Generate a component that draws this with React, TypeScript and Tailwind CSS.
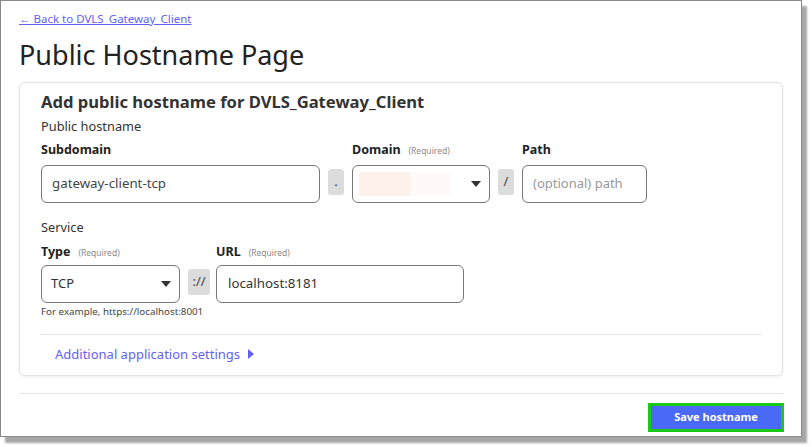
const font = { fontFamily: '"Noto Sans", "Open Sans", sans-serif' };

const Req = () => <span className="ml-2 text-[8.5px] font-normal text-[#8a8a8a]">(Required)</span>;

const Caret = () => (
  <svg width="10" height="6" viewBox="0 0 10 6" className="absolute right-[8px] top-1/2 -translate-y-1/2">
    <path d="M0 0h10L5 6z" fill="#333" />
  </svg>
);

const Sep = ({ children, w }: { children: string; w: string }) => (
  <div className={`mt-[4px] flex h-[26px] ${w} items-center justify-center rounded-[3px] bg-[#dcdcdc] text-[13px] text-[#444]`}>
    {children}
  </div>
);

export default function App() {
  return (
    <div className="h-[447px] w-[812px] overflow-hidden bg-white text-[#222]" style={font}>
      <div className="h-[437px] w-[802px] border border-[#8a8a8a] bg-white shadow-[5px_6px_2px_rgba(0,0,0,0.35)]">
        <div className="px-[18px] pt-[10px]">
          <div className="text-[11.5px] leading-[16px]">
            <a href="#" className="text-[#6262f0] underline">
              ← Back to DVLS_Gateway_Client
            </a>
          </div>
          <h1 className="mt-[10px] text-[27px] leading-[36px] text-[#222]">Public Hostname Page</h1>

          <div className="mt-[9px] h-[294px] rounded-[6px] border border-[#e3e3e3] px-[21px] pt-[8px] shadow-[0_1px_3px_rgba(0,0,0,0.08)]">
            <h2 className="text-[16.6px] font-bold leading-[22px] text-[#333]">Add public hostname for DVLS_Gateway_Client</h2>
            <div className="mt-[4px] text-[12.8px] leading-[18px] text-[#333]">Public hostname</div>

            <div className="mt-[5px] flex gap-[8px]">
              <div>
                <div className="h-[25px] text-[12.5px] font-bold leading-[20px]">Subdomain</div>
                <div className="flex h-[38px] w-[279px] items-center rounded-[6px] border border-[#777] px-[10px] text-[13.3px] text-[#444]">
                  gateway-client-tcp
                </div>
              </div>
              <div className="pt-[25px]">
                <Sep w="w-[16px]">.</Sep>
              </div>
              <div>
                <div className="h-[25px] text-[12.5px] font-bold leading-[20px]">
                  Domain
                  <Req />
                </div>
                <div className="relative flex h-[38px] w-[138px] items-center rounded-[6px] border border-[#777] px-[6px]">
                  <div className="h-[24px] w-[51px] bg-[#fdf1ea]" />
                  <div className="h-[24px] w-[40px] bg-[#fffaf7]" />
                  <Caret />
                </div>
              </div>
              <div className="pt-[25px]">
                <Sep w="w-[16px]">/</Sep>
              </div>
              <div>
                <div className="h-[25px] text-[12.5px] font-bold leading-[20px]">Path</div>
                <div className="flex h-[38px] w-[125px] items-center rounded-[6px] border border-[#777] px-[10px] text-[13px] text-[#999]">
                  (optional) path
                </div>
              </div>
            </div>

            <div className="mt-[15px] text-[12.8px] leading-[18px] text-[#333]">Service</div>
            <div className="mt-[6px] flex gap-[8px]">
              <div>
                <div className="h-[23px] text-[12.5px] font-bold leading-[20px]">
                  Type
                  <Req />
                </div>
                <div className="relative flex h-[38px] w-[139px] items-center rounded-[6px] border border-[#777] px-[9px] text-[13px] text-[#333]">
                  TCP
                  <Caret />
                </div>
              </div>
              <div className="pt-[23px]">
                <Sep w="w-[22px]">://</Sep>
              </div>
              <div className="ml-[-2px]">
                <div className="h-[23px] text-[12.5px] font-bold leading-[20px]">
                  URL
                  <Req />
                </div>
                <div className="flex h-[38px] w-[248px] items-center rounded-[6px] border border-[#777] px-[11px] text-[13.3px] text-[#333]">
                  localhost:8181
                </div>
              </div>
            </div>
            <div className="mt-[1px] text-[9.8px] leading-[16px] text-[#444]">For example, https://localhost:8001</div>
            <div className="mt-[14px] border-t border-[#e3e3e3]" />
            <div className="mt-[9px] flex items-center pl-[14px] text-[13px] leading-[20px] text-[#6262f0]">
              Additional application settings
              <svg width="6" height="10" viewBox="0 0 6 10" className="ml-[8px]">
                <path d="M0 0l6 5-6 5z" fill="#6262f0" />
              </svg>
            </div>
          </div>

          <div className="mt-[17px] border-t border-[#e3e3e3]" />
          <div className="mt-[9px] flex justify-end pr-[0px]">
            <button className="mr-[-1px] h-[29px] w-[136px] border-[3px] border-[#18c918] bg-[#4a69f6] text-[11px] font-bold text-white">
              Save hostname
            </button>
          </div>
        </div>
      </div>
    </div>
  );
}
